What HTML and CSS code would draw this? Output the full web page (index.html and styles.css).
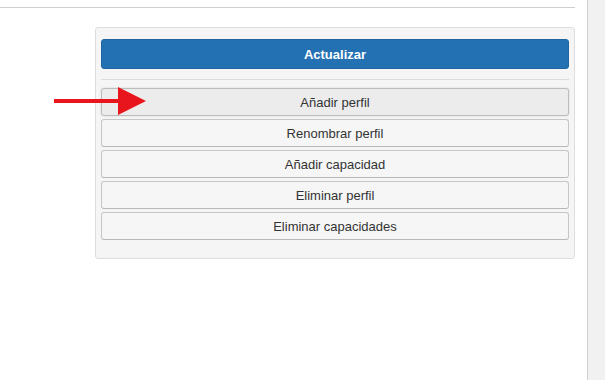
FILE: index.html
```html
<!DOCTYPE html>
<html lang="es">
<head>
    <meta charset="UTF-8">
    <meta name="viewport" content="width=device-width, initial-scale=1.0">
    <title>Perfiles</title>
    <link rel="stylesheet" href="styles.css">
</head>
<body>
    <div class="page">
        <div class="main">
            <div class="topline"></div>
            <div class="panel">
                <button class="btn-primary">Actualizar</button>
                <hr class="separator">
                <div class="actions">
                    <button class="btn active">Añadir perfil</button>
                    <button class="btn">Renombrar perfil</button>
                    <button class="btn">Añadir capacidad</button>
                    <button class="btn">Eliminar perfil</button>
                    <button class="btn">Eliminar capacidades</button>
                </div>
            </div>
        </div>
        <div class="scrollbar"></div>
    </div>

    <svg class="arrow" width="96" height="32" viewBox="0 0 96 32">
        <rect x="0" y="13" width="66" height="4" fill="#e8161c"/>
        <polygon points="64,1 92,15 64,29" fill="#e8161c"/>
    </svg>
</body>
</html>
```

FILE: styles.css
```css
body {
    font-family: "Liberation Sans", Arial, sans-serif;
    background-color: #fff;
    color: #333;
    margin: 0;
    padding: 0;
}
.page {
    display: flex;
    height: 380px;
}
.main {
    flex: 1;
}
.scrollbar {
    width: 17px;
    background-color: #f1f1f1;
    border-left: 1px solid #d2d2d2;
}
.topline {
    height: 7px;
    margin-right: 12px;
    border-bottom: 1px solid #d0d0d0;
}
.panel {
    margin: 19px 12px 0 95px;
    padding: 11px 5px 18px 5px;
    background-color: #f5f5f5;
    border: 1px solid #dedede;
    border-radius: 3px;
}
.btn-primary {
    display: block;
    width: 100%;
    height: 30px;
    background-color: #2371b3;
    border: 1px solid #1f65a2;
    border-radius: 3px;
    color: #fff;
    font-family: inherit;
    font-size: 13px;
    font-weight: bold;
}
.separator {
    border: 0;
    border-top: 1px solid #dcdcdc;
    margin: 10px 0 8px 0;
}
.actions {
    display: flex;
    flex-direction: column;
    gap: 3px;
}
.btn {
    display: block;
    width: 100%;
    height: 28px;
    background-color: #f6f6f6;
    border: 1px solid #c6c6c6;
    border-bottom-color: #b8b8b8;
    border-radius: 3px;
    color: #333;
    font-family: inherit;
    font-size: 13px;
}
.btn.active {
    background-color: #ececec;
    border-color: #bcbcbc;
    box-shadow: 0 0 2px rgba(0, 0, 0, 0.15);
}
.arrow {
    position: absolute;
    left: 54px;
    top: 86px;
}
```
